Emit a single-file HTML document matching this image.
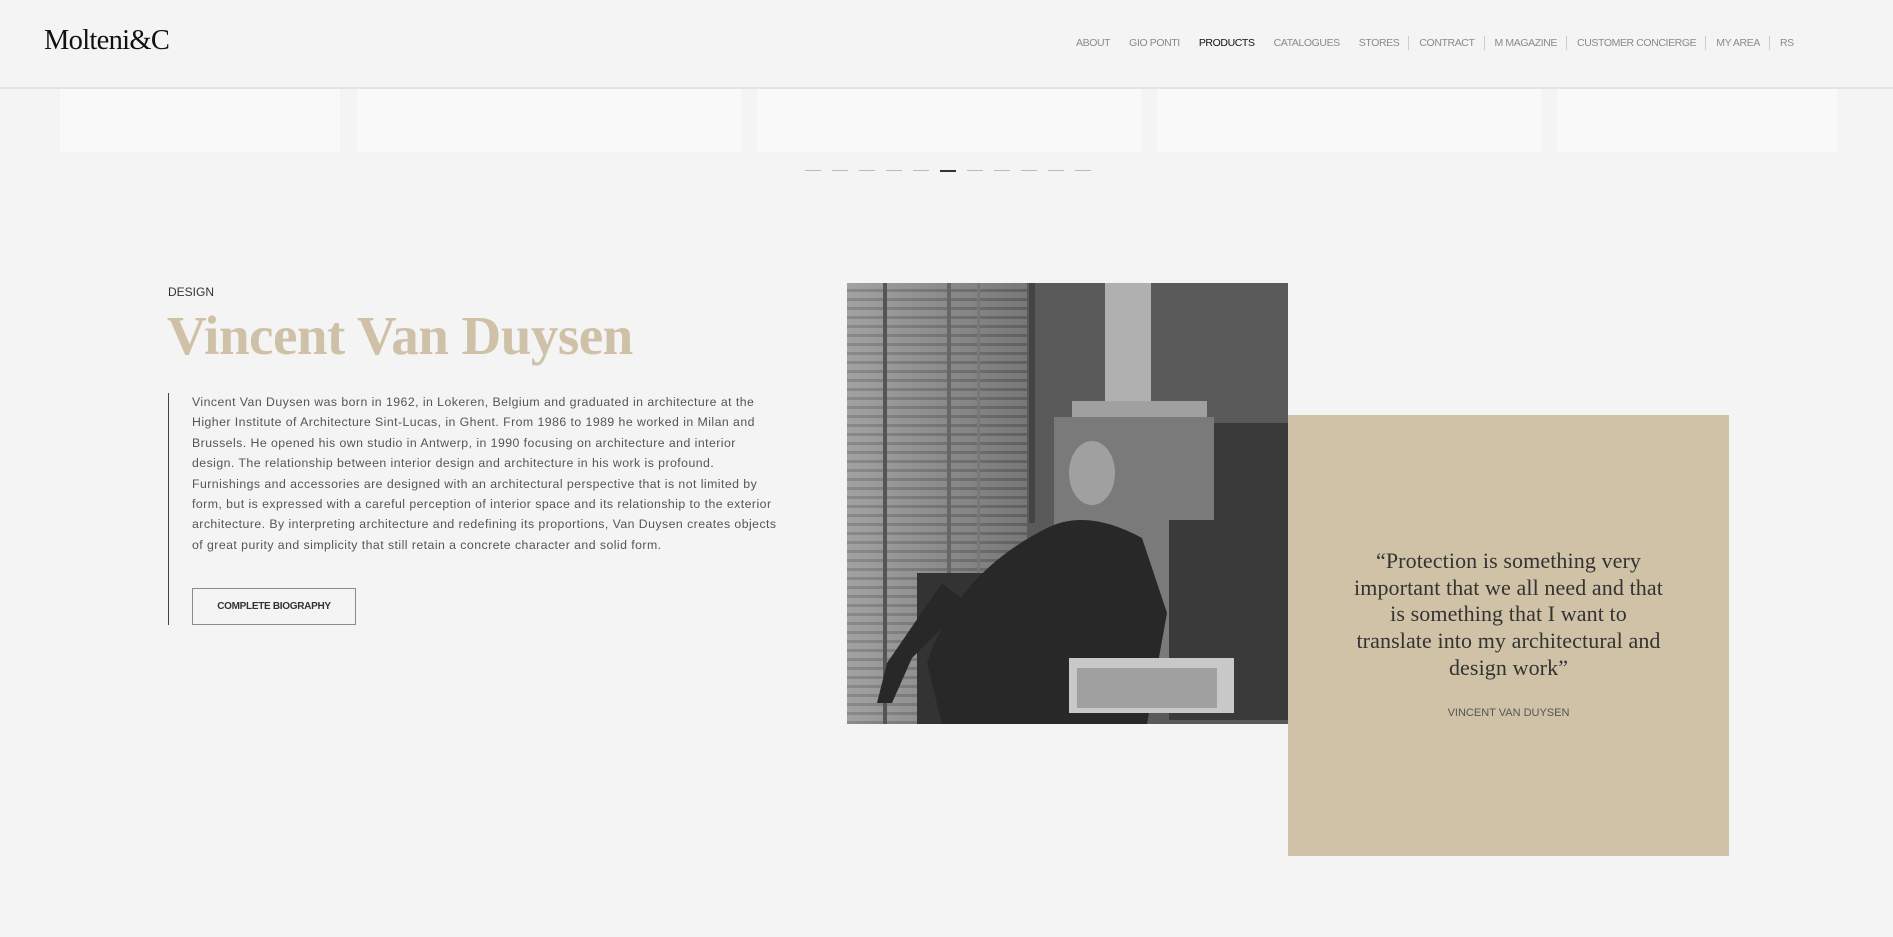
<!DOCTYPE html>
<html><head><meta charset="utf-8"><style>
*{margin:0;padding:0;box-sizing:border-box}
body{width:1893px;height:937px;background:#f4f4f4;font-family:"Liberation Sans",sans-serif;position:relative;overflow:hidden}
.hdr{position:absolute;left:0;top:0;width:1893px;height:89px;border-bottom:2px solid #e3e3e3;background:#f4f4f4}
.logo{position:absolute;left:44px;top:25px;font-family:"Liberation Serif",serif;font-size:28.5px;color:#111;letter-spacing:-.7px}
.nav{position:absolute;top:36px;left:1076px;font-size:10.5px;color:#8a8a8a;display:flex;align-items:center;white-space:nowrap;letter-spacing:-.4px}
.nav span{margin-right:19px}
.nav i{display:inline-block;width:1px;height:14px;background:#ccc;margin:0 10px 0 -10px}
.card{position:absolute;top:89px;height:63px;background:#f9f9f9}
.dash{position:absolute;top:170px;width:16px;height:1px;background:#bbb}
.dsg{position:absolute;left:168px;top:285px;font-size:12px;color:#333}
h1{position:absolute;left:167px;top:304px;font-family:"Liberation Serif",serif;font-weight:bold;font-size:55px;color:#cfc1a7;letter-spacing:-.5px}
.bar{position:absolute;left:168px;top:393px;width:1px;height:232px;background:#444}
.txt{position:absolute;left:192px;top:392px;font-size:12.3px;line-height:20.4px;color:#555;white-space:nowrap;letter-spacing:.45px}
.btn{position:absolute;left:192px;top:588px;width:164px;height:37px;border:1px solid #8a8a8a;font-size:10px;font-weight:bold;color:#333;text-align:center;line-height:35px;letter-spacing:-.3px}
.photo{position:absolute;left:847px;top:283px;width:441px;height:441px;overflow:hidden;background:#4a4a4a}
.box{position:absolute;left:1288px;top:415px;width:441px;height:441px;background:#d0c2a7}
.q{position:absolute;left:0;top:133px;width:441px;text-align:center;font-family:"Liberation Serif",serif;font-size:22px;line-height:26.7px;color:#333;white-space:nowrap;letter-spacing:.1px}
.au{position:absolute;left:0;top:292px;width:441px;text-align:center;font-size:11px;color:#555}
</style></head><body>
<div class="hdr">
<div class="logo">Molteni&amp;C</div>
<div class="nav"><span>ABOUT</span><span>GIO PONTI</span><span style="color:#111">PRODUCTS</span><span>CATALOGUES</span><span>STORES</span><i></i><span>CONTRACT</span><i></i><span>M MAGAZINE</span><i></i><span>CUSTOMER CONCIERGE</span><i></i><span>MY AREA</span><i></i><span>RS</span></div>
</div>
<div class="card" style="left:60px;width:280px"></div>
<div class="card" style="left:357px;width:384px"></div>
<div class="card" style="left:757px;width:384px"></div>
<div class="card" style="left:1157px;width:384px"></div>
<div class="card" style="left:1557px;width:280px"></div>
<div class="dash" style="left:805px"></div><div class="dash" style="left:832px"></div><div class="dash" style="left:859px"></div><div class="dash" style="left:886px"></div><div class="dash" style="left:913px"></div><div class="dash" style="left:940px;background:#333;height:2px"></div><div class="dash" style="left:967px"></div><div class="dash" style="left:994px"></div><div class="dash" style="left:1021px"></div><div class="dash" style="left:1048px"></div><div class="dash" style="left:1075px"></div>
<div class="dsg">DESIGN</div>
<h1>Vincent Van Duysen</h1>
<div class="bar"></div>
<div class="txt">Vincent Van Duysen was born in 1962, in Lokeren, Belgium and graduated in architecture at the<br>Higher Institute of Architecture Sint-Lucas, in Ghent. From 1986 to 1989 he worked in Milan and<br>Brussels. He opened his own studio in Antwerp, in 1990 focusing on architecture and interior<br>design. The relationship between interior design and architecture in his work is profound.<br>Furnishings and accessories are designed with an architectural perspective that is not limited by<br>form, but is expressed with a careful perception of interior space and its relationship to the exterior<br>architecture. By interpreting architecture and redefining its proportions, Van Duysen creates objects<br>of great purity and simplicity that still retain a concrete character and solid form.</div>
<div class="btn">COMPLETE BIOGRAPHY</div>
<div class="photo"><svg width="441" height="441" viewBox="0 0 441 441">
<defs><pattern id="bl" width="10" height="9" patternUnits="userSpaceOnUse"><rect width="10" height="9" fill="#9a9a9a"/><rect y="6" width="10" height="3" fill="#6a6a6a"/></pattern>
<linearGradient id="wg" x1="0" x2="1"><stop offset="0" stop-color="#aaa"/><stop offset="1" stop-color="#555"/></linearGradient></defs>
<rect width="441" height="441" fill="#4b4b4b"/>
<rect x="180" y="0" width="261" height="441" fill="#5a5a5a"/>
<rect x="0" y="0" width="180" height="441" fill="url(#bl)"/>
<rect x="0" y="0" width="180" height="441" fill="url(#wg)" opacity=".5"/>
<rect x="36" y="0" width="4" height="441" fill="#555"/><rect x="100" y="0" width="4" height="441" fill="#666"/><rect x="130" y="0" width="3" height="441" fill="#777"/>
<rect x="182" y="0" width="6" height="240" fill="#444"/>
<rect x="258" y="0" width="46" height="120" fill="#b0b0b0"/>
<rect x="225" y="118" width="135" height="16" fill="#a0a0a0"/>
<rect x="207" y="134" width="160" height="260" fill="#7a7a7a"/>
<rect x="367" y="140" width="74" height="170" fill="#3a3a3a"/>
<rect x="322" y="237" width="119" height="200" fill="#3a3a3a"/>
<rect x="70" y="290" width="90" height="151" fill="#333"/>
<ellipse cx="245" cy="190" rx="23" ry="32" fill="#a0a0a0"/>
<path d="M200 245 Q240 225 295 255 L320 330 L300 441 L95 441 L80 380 Q110 290 200 245Z" fill="#282828"/>
<path d="M95 300 L40 380 L30 420 L45 420 L65 375 L120 320Z" fill="#282828"/>
<rect x="222" y="375" width="165" height="55" fill="#c8c8c8"/>
<rect x="230" y="385" width="140" height="40" fill="#a0a0a0"/>
</svg></div>
<div class="box">
<div class="q">“Protection is something very<br>important that we all need and that<br>is something that I want to<br>translate into my architectural and<br>design work”</div>
<div class="au">VINCENT VAN DUYSEN</div>
</div>
</body></html>
